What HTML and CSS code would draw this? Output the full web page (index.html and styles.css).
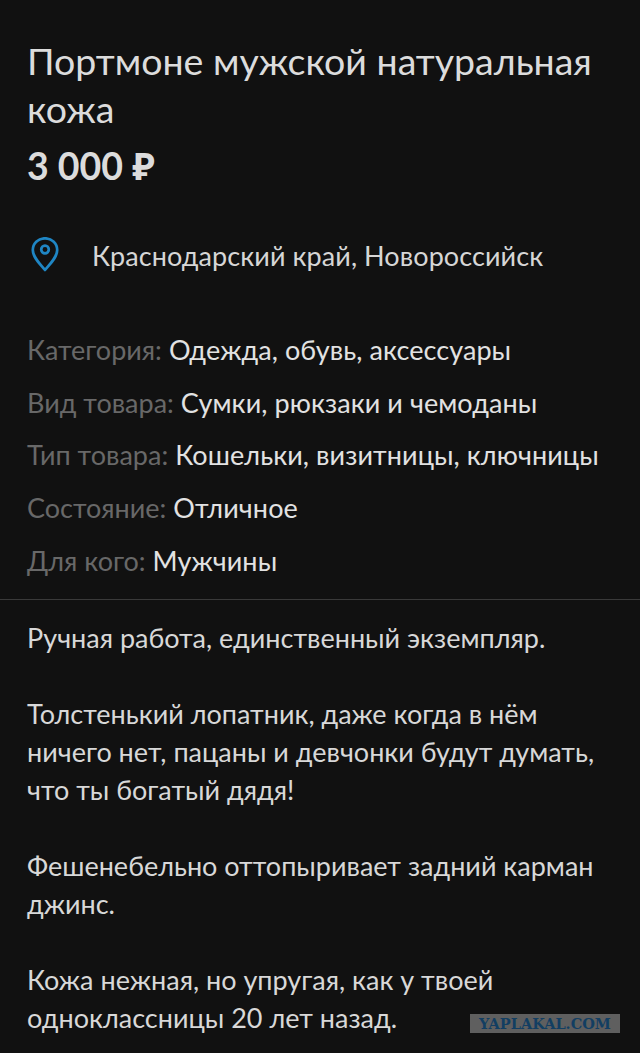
FILE: index.html
```html
<!DOCTYPE html>
<html lang="ru">
<head>
<meta charset="utf-8">
<title>Портмоне мужской натуральная кожа</title>
<link rel="stylesheet" href="styles.css">
</head>
<body>
<main class="page">
  <header class="head">
    <h1 class="title">Портмоне мужской натуральная кожа</h1>
    <div class="price">3 000 ₽</div>
  </header>
  <div class="location">
    <svg class="pin" viewBox="0 1 28 36" width="28" height="36" aria-hidden="true">
      <path d="M14 2.300C7 2.300 1.800 7.500 1.800 14c0 7.200 7 13.600 12.200 20 5.200-6.400 12.200-12.800 12.200-20C26.200 7.500 21 2.300 14 2.300Z" fill="none" stroke="#1f86c4" stroke-width="2.700" stroke-linejoin="round"/>
      <circle cx="14" cy="13.500" r="3.800" fill="none" stroke="#1f86c4" stroke-width="2.700"/>
    </svg>
    <span class="place">Краснодарский край, Новороссийск</span>
  </div>
  <dl class="params">
    <div class="param"><dt>Категория:</dt><dd>Одежда, обувь, аксессуары</dd></div>
    <div class="param"><dt>Вид товара:</dt><dd>Сумки, рюкзаки и чемоданы</dd></div>
    <div class="param"><dt>Тип товара:</dt><dd>Кошельки, визитницы, ключницы</dd></div>
    <div class="param"><dt>Состояние:</dt><dd>Отличное</dd></div>
    <div class="param"><dt>Для кого:</dt><dd>Мужчины</dd></div>
  </dl>
  <section class="desc">
    <p>Ручная работа, единственный экземпляр.</p>
    <p>Толстенький лопатник, даже когда в нём<br>ничего нет, пацаны и девчонки будут думать,<br>что ты богатый дядя!</p>
    <p>Фешенебельно оттопыривает задний карман<br>джинс.</p>
    <p>Кожа нежная, но упругая, как у твоей<br>одноклассницы 20 лет назад.</p>
  </section>
  <div class="watermark">YAPLAKAL.COM</div>
</main>
</body>
</html>
```
FILE: styles.css
```css
* { box-sizing: border-box; }
html, body { margin: 0; padding: 0; }
body {
  width: 640px;
  height: 1053px;
  overflow: hidden;
  background: #111111;
  color: #e6e6e6;
  font-family: Lato, "Noto Sans", sans-serif;
}
.page { position: relative; height: 1053px; overflow: hidden; }
.head { padding: 37px 27px 0; }
.title {
  margin: 0;
  font-size: 37.5px;
  line-height: 47.500px;
  font-weight: 400;
  color: #dcdcdc;
}
.price {
  margin-top: 12px;
  font-size: 37.5px;
  line-height: 44px;
  font-weight: 700;
  color: #dcdcdc;
}
.location {
  display: flex;
  align-items: center;
  gap: 33px;
  margin-top: 47px;
  padding-left: 31px;
  height: 40px;
}
.pin { flex: none; }
.place { font-size: 27px; color: #d6d6d6; letter-spacing: 0.08px; }
.params { margin: 48px 0 0; padding: 0 27px 13px; border-bottom: 1px solid #3a3a3a; }
.param { display: flex; gap: 7px; height: 52.700px; align-items: center; font-size: 27px; }
.param dt { color: #686868; }
.param dd { margin: 0; color: #e2e2e2; letter-spacing: 0.08px; }
.desc { padding: 19px 27px 0; font-size: 27px; line-height: 38px; color: #d8d8d8; }
.desc p { margin: 0 0 38px; }
.watermark {
  position: absolute;
  left: 470px;
  top: 1014px;
  width: 150px;
  height: 19px;
  background: #5f5f5f;
  color: #123e62;
  font-family: "DejaVu Serif", serif;
  font-weight: 700;
  font-size: 14.500px;
  line-height: 19px;
  text-align: center;
}
```
